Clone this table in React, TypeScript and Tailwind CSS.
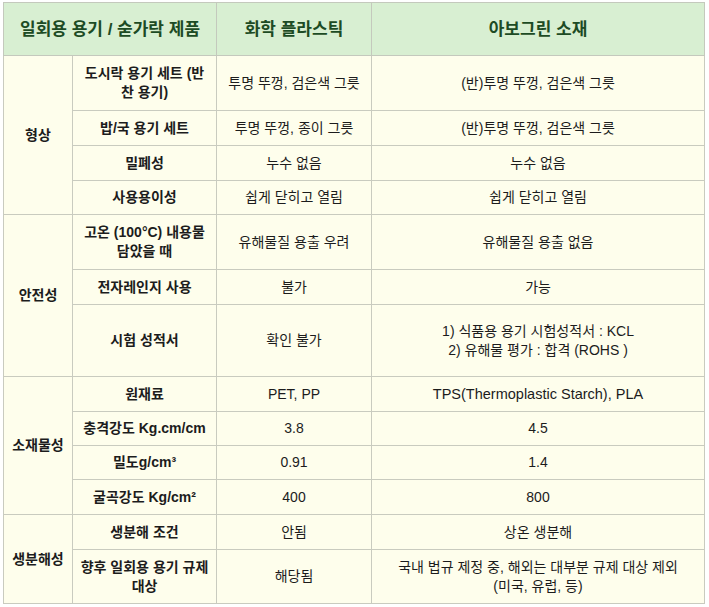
import React from "react";

const font = { fontFamily: '"Liberation Sans", "Noto Sans CJK KR", sans-serif' };

type Row = {
  cat?: { label: string; span: number };
  item: React.ReactNode;
  a: React.ReactNode;
  b: React.ReactNode;
  h: string;
};

const rows: Row[] = [
  { cat: { label: "형상", span: 4 }, item: <>도시락 용기 세트 (반<br />찬 용기)</>, a: "투명 뚜껑, 검은색 그릇", b: "(반)투명 뚜껑, 검은색 그릇", h: "h-[55px]" },
  { item: "밥/국 용기 세트", a: "투명 뚜껑, 종이 그릇", b: "(반)투명 뚜껑, 검은색 그릇", h: "h-[35px]" },
  { item: "밀폐성", a: "누수 없음", b: "누수 없음", h: "h-[35px]" },
  { item: "사용용이성", a: "쉽게 닫히고 열림", b: "쉽게 닫히고 열림", h: "h-[34px]" },
  { cat: { label: "안전성", span: 3 }, item: <>고온 (100°C) 내용물<br />담았을 때</>, a: "유해물질 용출 우려", b: "유해물질 용출 없음", h: "h-[55px]" },
  { item: "전자레인지 사용", a: "불가", b: "가능", h: "h-[35px]" },
  { item: "시험 성적서", a: "확인 불가", b: <>1) 식품용 용기 시험성적서 : KCL<br />2) 유해물 평가 : 합격 (ROHS )</>, h: "h-[72px]" },
  { cat: { label: "소재물성", span: 4 }, item: "원재료", a: "PET, PP", b: <span className="text-[14.5px]">TPS(Thermoplastic Starch), PLA</span>, h: "h-[35px]" },
  { item: "충격강도 Kg.cm/cm", a: "3.8", b: "4.5", h: "h-[34px]" },
  { item: "밀도g/cm³", a: "0.91", b: "1.4", h: "h-[34px]" },
  { item: "굴곡강도 Kg/cm²", a: "400", b: "800", h: "h-[35px]" },
  { cat: { label: "생분해성", span: 2 }, item: "생분해 조건", a: "안됨", b: "상온 생분해", h: "h-[35px]" },
  { item: <>향후 일회용 용기 규제<br />대상</>, a: "해당됨", b: <>국내 법규 제정 중, 해외는 대부분 규제 대상 제외<br />(미국, 유럽, 등)</>, h: "h-[54px]" },
];

export default function App() {
  return (
    <div className="w-[709px] h-[607px] bg-white pt-[2px] pl-[3px]" style={font}>
      <table className="border-collapse table-fixed w-[701px] text-[14px] leading-[19px] text-[#1c1c1c]">
        <colgroup>
          <col className="w-[69px]" />
          <col className="w-[144px]" />
          <col className="w-[155px]" />
          <col className="w-[333px]" />
        </colgroup>
        <thead>
          <tr className="h-[53px] bg-[#d8efd2] text-[#1d4b24] text-[17px] font-semibold">
            <th colSpan={2} className="border border-[#c4c9bd] text-center align-middle font-semibold">일회용 용기 / 숟가락 제품</th>
            <th className="border border-[#c4c9bd] text-center align-middle font-semibold">화학 플라스틱</th>
            <th className="border border-[#c4c9bd] text-center align-middle font-semibold">아보그린 소재</th>
          </tr>
        </thead>
        <tbody className="bg-[#fefeec]">
          {rows.map((r, i) => (
            <tr key={i} className={r.h}>
              {r.cat && (
                <td rowSpan={r.cat.span} className="border border-[#c9cbbf] text-center align-middle font-bold">
                  {r.cat.label}
                </td>
              )}
              <td className="border border-[#c9cbbf] text-center align-middle font-bold whitespace-nowrap">{r.item}</td>
              <td className="border border-[#c9cbbf] text-center align-middle whitespace-nowrap">{r.a}</td>
              <td className="border border-[#c9cbbf] text-center align-middle whitespace-nowrap">{r.b}</td>
            </tr>
          ))}
        </tbody>
      </table>
    </div>
  );
}
